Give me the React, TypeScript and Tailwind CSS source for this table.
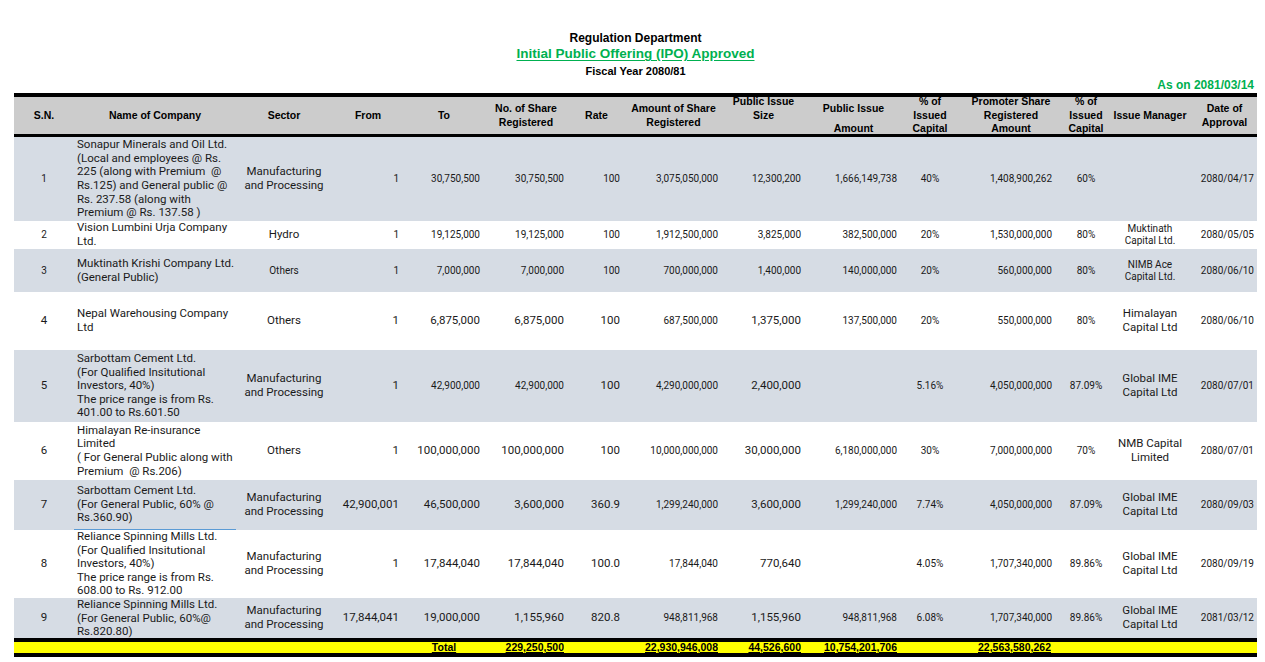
type Cell = string | string[] | { v: string | string[]; lg?: boolean };

interface Row {
  h: string;
  shade: boolean;
  clip?: boolean;
  line?: boolean;
  cells: Cell[];
}

const cols = [
  { w: 'w-[60px]', a: 'text-center' },
  { w: 'w-[162px]', a: 'text-left pl-[3px]' },
  { w: 'w-[96px]', a: 'text-center' },
  { w: 'w-[72px]', a: 'text-right pr-[5px]' },
  { w: 'w-[80px]', a: 'text-right pr-[4px]' },
  { w: 'w-[84px]', a: 'text-right pr-[4px]' },
  { w: 'w-[57px]', a: 'text-right pr-[5px]' },
  { w: 'w-[97px]', a: 'text-right pr-[4px]' },
  { w: 'w-[83px]', a: 'text-right pr-[4px]' },
  { w: 'w-[97px]', a: 'text-right pr-[5px]' },
  { w: 'w-[56px]', a: 'text-center' },
  { w: 'w-[106px]', a: 'text-right pr-[12px]' },
  { w: 'w-[44px]', a: 'text-center' },
  { w: 'w-[84px]', a: 'text-center' },
  { w: 'w-[65px]', a: 'text-right pr-[3px]' },
];

const headers: string[][] = [
  ['S.N.'],
  ['Name of Company'],
  ['Sector'],
  ['From'],
  ['To'],
  ['No. of Share', 'Registered'],
  ['Rate'],
  ['Amount of Share', 'Registered'],
  ['Public Issue', 'Size', '\u00a0'],
  [],
  ['% of', 'Issued', 'Capital'],
  ['Promoter Share', 'Registered', 'Amount'],
  ['% of', 'Issued', 'Capital'],
  ['Issue Manager'],
  ['Date of', 'Approval'],
];

const L = (v: string | string[]) => ({ v, lg: true });
const mfg = L(['Manufacturing', 'and Processing']);
const gime = L(['Global IME', 'Capital Ltd']);

const rows: Row[] = [
  {
    h: 'h-[84px]',
    shade: true,
    cells: [
      '1',
      ['Sonapur Minerals and Oil Ltd.', '(Local and employees @ Rs.', '225 (along with Premium  @', 'Rs.125) and General public @', 'Rs. 237.58 (along with', 'Premium @ Rs. 137.58 )'],
      mfg, '1', '30,750,500', '30,750,500', '100', '3,075,050,000', '12,300,200', '1,666,149,738', '40%', '1,408,900,262', '60%', '', '2080/04/17',
    ],
  },
  {
    h: 'h-[28px]',
    shade: false,
    cells: [
      '2',
      ['Vision Lumbini Urja Company', 'Ltd.'],
      L('Hydro'), '1', '19,125,000', '19,125,000', '100', '1,912,500,000', '3,825,000', '382,500,000', '20%', '1,530,000,000', '80%', ['Muktinath', 'Capital Ltd.'], '2080/05/05',
    ],
  },
  {
    h: 'h-[43px]',
    shade: true,
    cells: [
      '3',
      ['Muktinath Krishi Company Ltd.', '(General Public)'],
      'Others', '1', '7,000,000', '7,000,000', '100', '700,000,000', '1,400,000', '140,000,000', '20%', '560,000,000', '80%', ['NIMB Ace', 'Capital Ltd.'], '2080/06/10',
    ],
  },
  {
    h: 'h-[58px]',
    shade: false,
    cells: [
      L('4'),
      ['Nepal Warehousing Company', 'Ltd'],
      L('Others'), L('1'), L('6,875,000'), L('6,875,000'), L('100'), '687,500,000', L('1,375,000'), '137,500,000', '20%', '550,000,000', '80%', L(['Himalayan', 'Capital Ltd']), '2080/06/10',
    ],
  },
  {
    h: 'h-[72px]',
    shade: true,
    cells: [
      L('5'),
      ['Sarbottam Cement Ltd.', '(For Qualified Insitutional', 'Investors, 40%)', 'The price range is from Rs.', '401.00 to Rs.601.50'],
      mfg, L('1'), '42,900,000', '42,900,000', L('100'), '4,290,000,000', L('2,400,000'), '', '5.16%', '4,050,000,000', '87.09%', gime, '2080/07/01',
    ],
  },
  {
    h: 'h-[58px]',
    shade: false,
    cells: [
      L('6'),
      ['Himalayan Re-insurance', 'Limited', '( For General Public along with', 'Premium  @ Rs.206)'],
      L('Others'), L('1'), L('100,000,000'), L('100,000,000'), L('100'), '10,000,000,000', L('30,000,000'), '6,180,000,000', '30%', '7,000,000,000', '70%', L(['NMB Capital', 'Limited']), '2080/07/01',
    ],
  },
  {
    h: 'h-[50px]',
    shade: true,
    line: true,
    cells: [
      L('7'),
      ['Sarbottam Cement Ltd.', '(For General Public, 60% @', 'Rs.360.90)'],
      mfg, L('42,900,001'), L('46,500,000'), L('3,600,000'), L('360.9'), '1,299,240,000', L('3,600,000'), '1,299,240,000', '7.74%', '4,050,000,000', '87.09%', gime, '2080/09/03',
    ],
  },
  {
    h: 'h-[68px]',
    shade: false,
    cells: [
      L('8'),
      ['Reliance Spinning Mills Ltd.', '(For Qualified Insitutional', 'Investors, 40%)', 'The price range is from Rs.', '608.00 to Rs. 912.00'],
      mfg, L('1'), L('17,844,040'), L('17,844,040'), L('100.0'), '17,844,040', L('770,640'), '', '4.05%', '1,707,340,000', '89.86%', gime, '2080/09/19',
    ],
  },
  {
    h: 'h-[40px]',
    shade: true,
    clip: true,
    cells: [
      L('9'),
      ['Reliance Spinning Mills Ltd.', '(For General Public, 60%@', 'Rs.820.80)'],
      mfg, L('17,844,041'), L('19,000,000'), L('1,155,960'), L('820.8'), '948,811,968', L('1,155,960'), '948,811,968', '6.08%', '1,707,340,000', '89.86%', gime, '2081/03/12',
    ],
  },
];

const totals: Record<number, string> = {
  4: 'Total',
  5: '229,250,500',
  7: '22,930,946,008',
  8: '44,526,600',
  9: '10,754,201,706',
  11: '22,563,580,262',
};

function lines(v: string | string[]) {
  return (Array.isArray(v) ? v : [v]).map((t, i) => (
    <div key={i} className="whitespace-pre">
      {t}
    </div>
  ));
}

function BodyCell({ cell, col, row }: { cell: Cell; col: number; row: Row }) {
  const obj = typeof cell === 'object' && !Array.isArray(cell) ? cell : { v: cell, lg: false };
  const isName = col === 1;
  const size = isName || obj.lg ? 'text-[11.5px] leading-[13.6px]' : 'text-[10px] leading-[12px]';
  return (
    <td
      className={`p-0 align-middle text-[#1a1a1a] ${cols[col].a} ${size} ${
        isName && row.line ? 'border-b border-[#5b9bd5]' : ''
      }`}
    >
      {isName && row.clip ? <div className="max-h-[40px] overflow-hidden">{lines(obj.v)}</div> : lines(obj.v)}
    </td>
  );
}

export default function App() {
  return (
    <div className="min-h-screen bg-white pl-[14px] pr-[8px] font-['Liberation_Sans',Arial,sans-serif]">
      <div className="pt-[31px] text-center font-bold">
        <div className="text-[12px] leading-[15px] text-black">Regulation Department</div>
        <div className="text-[13.5px] leading-[16px] text-[#00b050] underline underline-offset-2">
          Initial Public Offering (IPO) Approved
        </div>
        <div className="mt-[2px] text-[11px] leading-[14px] text-black">Fiscal Year 2080/81</div>
      </div>
      <div className="pr-[3px] text-right text-[12px] font-bold leading-[15px] text-[#00b050]">As on 2081/03/14</div>

      <table className="w-[1243px] table-fixed border-separate border-spacing-0 font-['Roboto',Arial,sans-serif]">
        <colgroup>
          {cols.map((c, i) => (
            <col key={i} className={c.w} />
          ))}
        </colgroup>
        <thead>
          <tr>
            {headers.map((h, i) => (
              <th
                key={i}
                className="border-t-4 border-b-[3px] border-black bg-[#cccccc] p-0 align-middle font-['Liberation_Sans',Arial,sans-serif] text-[10.5px] font-bold leading-[13.5px] text-black"
              >
                {i === 9 ? (
                  <div className="flex h-[37px] flex-col items-center pt-[5px]">
                    <div>Public Issue</div>
                    <div className="mt-[6px]">Amount</div>
                  </div>
                ) : (
                  <div className="flex h-[37px] flex-col items-center justify-center">
                    {h.map((t, j) => (
                      <div key={j} className="whitespace-nowrap">
                        {t}
                      </div>
                    ))}
                  </div>
                )}
              </th>
            ))}
          </tr>
        </thead>
        <tbody>
          {rows.map((r, ri) => (
            <tr key={ri} className={`${r.h} ${r.shade ? 'bg-[#d6dce4]' : 'bg-white'}`}>
              {r.cells.map((c, ci) => (
                <BodyCell key={ci} cell={c} col={ci} row={r} />
              ))}
            </tr>
          ))}
          <tr>
            {cols.map((c, i) => (
              <td
                key={i}
                className={`border-y-4 border-black bg-[#ffff00] p-0 font-['Liberation_Sans',Arial,sans-serif] text-[10.5px] font-bold leading-[11px] text-black underline ${
                  i === 4 ? 'text-center' : i === 11 ? 'text-right pr-[13px]' : c.a
                }`}
              >
                <div className="h-[11px] overflow-hidden whitespace-nowrap">{totals[i] ?? ''}</div>
              </td>
            ))}
          </tr>
        </tbody>
      </table>
    </div>
  );
}
